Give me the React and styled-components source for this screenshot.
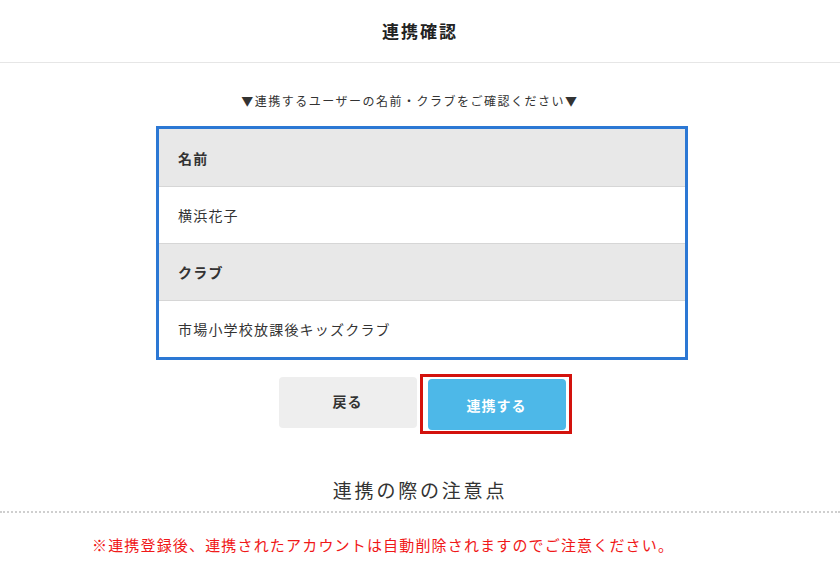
import React from "react";
import styled, { createGlobalStyle } from "styled-components";

const GlobalStyle = createGlobalStyle`
  body {
    margin: 0;
    background: #fff;
    font-family: "Noto Sans CJK JP", "Noto Sans", sans-serif;
    color: #333;
  }
`;

const Page = styled.div`
  width: 100%;
  padding-bottom: 20px;
`;

const Header = styled.header`
  height: 62px;
  border-bottom: 1px solid #e6e6e6;
  display: flex;
  align-items: center;
  justify-content: center;
`;

const Title = styled.h1`
  margin: 0;
  font-size: 17px;
  font-weight: 700;
  letter-spacing: 2px;
  color: #222;
  padding-bottom: 2px;
`;

const Lead = styled.p`
  margin: 28px 0 0;
  height: 20px;
  line-height: 20px;
  text-align: center;
  padding-right: 20px;
  font-size: 12px;
  letter-spacing: 1.5px;
  color: #333;
`;

const InfoTable = styled.div`
  width: 526px;
  margin: 15px 0 0 calc(50% - 264px);
  border: 3px solid #2c78d4;
`;

const Row = styled.div`
  height: 57px;
  box-sizing: border-box;
  display: flex;
  align-items: center;
  padding-left: 19px;
  font-size: 14px;
  letter-spacing: 1.2px;
  background: ${({ head }) => (head ? "#e8e8e8" : "#fff")};
  font-weight: ${({ head }) => (head ? 700 : 400)};
  color: #333;
  & + & {
    border-top: 1px solid #d6d6d6;
  }
`;

const Buttons = styled.div`
  display: flex;
  justify-content: center;
  align-items: flex-start;
  gap: 11px;
  margin-top: 17px;
  padding-left: 4px;
`;

const Button = styled.div`
  width: 138px;
  height: 51px;
  border-radius: 4px;
  display: flex;
  align-items: center;
  justify-content: center;
  font-size: 14px;
  font-weight: 700;
  letter-spacing: 1px;
  background: ${({ primary }) => (primary ? "#4db8e8" : "#eeeeee")};
  color: ${({ primary }) => (primary ? "#fff" : "#333")};
  padding-bottom: ${({ primary }) => (primary ? "0" : "4px")};
  box-sizing: border-box;
`;

const Highlight = styled.div`
  position: relative;
  margin-top: 2px;

  &::after {
    content: "";
    position: absolute;
    top: -5px;
    left: -8px;
    right: -6px;
    bottom: -4px;
    border: 3px solid #d3120d;
    pointer-events: none;
  }
`;

const SectionTitle = styled.h2`
  margin: 45px 0 0;
  height: 36px;
  line-height: 30px;
  text-align: center;
  font-size: 19px;
  font-weight: 400;
  letter-spacing: 2.8px;
  color: #333;
  border-bottom: 2px dotted #cfcfcf;
`;

const Notice = styled.p`
  margin: 21px 0 0;
  line-height: 22px;
  padding-left: 92px;
  font-size: 15px;
  letter-spacing: 1.17px;
  color: #f01818;
`;

export default function App() {
  return (
    <Page>
      <GlobalStyle />
      <Header>
        <Title>連携確認</Title>
      </Header>
      <Lead>▼連携するユーザーの名前・クラブをご確認ください▼</Lead>
      <InfoTable>
        <Row head>名前</Row>
        <Row>横浜花子</Row>
        <Row head>クラブ</Row>
        <Row>市場小学校放課後キッズクラブ</Row>
      </InfoTable>
      <Buttons>
        <Button>戻る</Button>
        <Highlight>
          <Button primary>連携する</Button>
        </Highlight>
      </Buttons>
      <SectionTitle>連携の際の注意点</SectionTitle>
      <Notice>※連携登録後、連携されたアカウントは自動削除されますのでご注意ください。</Notice>
    </Page>
  );
}
